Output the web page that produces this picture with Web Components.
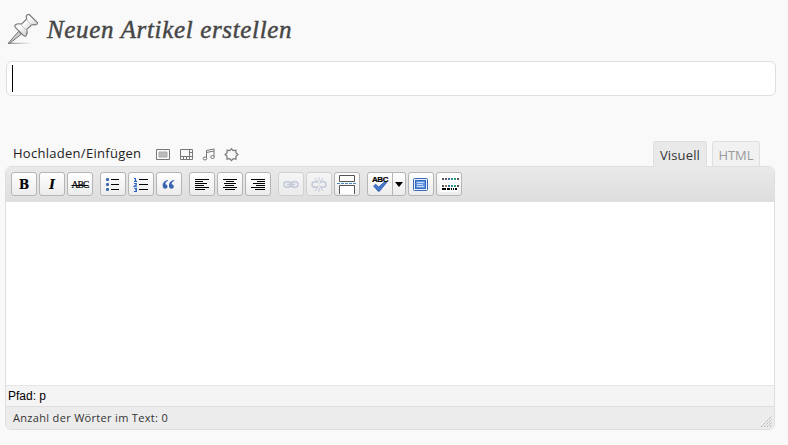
<!DOCTYPE html>
<html lang="de">
<head>
<meta charset="utf-8">
<title>Neuen Artikel erstellen</title>
<style>
body{margin:0;background:#f9f9f9;width:788px;height:445px;overflow:hidden;font-family:"Open Sans","Noto Sans",sans-serif;color:#333}
</style>
</head>
<body>
<post-editor></post-editor>
<script>
const define = (name, html) => customElements.define(name, class extends HTMLElement {
  constructor() {
    super();
    const t = document.createElement('template');
    t.innerHTML = html;
    this.attachShadow({mode: 'open'}).append(t.content.cloneNode(true));
  }
});

const rows = (list) => list.map(([x, y, w]) => `<rect x="${x}" y="${y}" width="${w}" height="1"/>`).join('');
const align = (kind) => rows([14, 8, 12, 9, 14, 10].map((w, i) => [kind === 'l' ? 6 : kind === 'r' ? 20 - w : 6 + Math.floor((14 - w) / 2), 7 + i * 2, w]));
const dots = (y, cols) => cols.map((c, i) => `<rect x="${6 + i * 3}" y="${y}" width="2" height="2" fill="${c}"/>`).join('');
const quote = '<path d="M12 8C8.500 8.500 6.500 10.800 6.700 14c.1 1.700 1.100 2.700 2.500 2.700 1.300 0 2.300-.9 2.300-2.200S10.500 12.300 9.300 12.300c0-1.600.9-2.900 2.700-3.600z"/>';
const chain = '<g fill="none" stroke="#9eabc6" stroke-width="1.500"><rect x="6" y="9.800" width="7" height="5.400" rx="2.700"/><rect x="13" y="9.800" width="7" height="5.400" rx="2.700"/>';
const icons = {
  ul: '<g fill="#3c6cb0"><rect x="6" y="6" width="3" height="3" rx="1"/><rect x="6" y="11" width="3" height="3" rx="1"/><rect x="6" y="16" width="3" height="3" rx="1"/></g><g shape-rendering="crispEdges">' + rows([[11,7,8],[11,12,8],[11,17,8]]) + '</g>',
  ol: '<g fill="none" stroke="#2a62c0" stroke-width="1.100"><path d="M6 6.500h1.500v3M6 9.400h3M6 11.500h2.300v1.200L6.200 14.300H9M6 16.300h2.400v1.500H7m1.400 0v1.700H6"/></g><g shape-rendering="crispEdges">' + rows([[11,7,9],[11,12,9],[11,17,9]]) + '</g>',
  quote: '<g fill="#3a63ae">' + quote + '<g transform="translate(6.300 0)">' + quote + '</g></g>',
  left: '<g shape-rendering="crispEdges">' + align('l') + '</g>',
  center: '<g shape-rendering="crispEdges">' + align('c') + '</g>',
  right: '<g shape-rendering="crispEdges">' + align('r') + '</g>',
  link: chain + '<path d="M9 12.500h8" stroke-width="1.800"/></g>',
  unlink: chain + '<path d="M13 5v4M9 6l2 3M17 6l-2 3M13 16v4M9 19l2-3M17 19l-2-3" stroke-width="1"/></g><path d="M12.200 9h1.500v7h-1.500z" fill="#f4f4f4"/>',
  more: '<g fill="#fff" stroke="#555"><path d="M5.500 3.500h15v6h-15zM5.500 22v-8.500h15V22"/></g><path d="M3 11.500h20" stroke="#4a8ac0" stroke-dasharray="3 1"/>',
  spell: '<path d="M6.500 14l2.300-1.800 2.700 2.900 6.500-5.600 1.700 1.100-7.200 8.600h-1.500z" fill="#4679cc" stroke="#2450a0" stroke-width=".7"/>',
  full: '<rect x="5.500" y="6.500" width="14" height="12" rx="1" fill="#e9f1fc" stroke="#3868b8"/><rect x="7.500" y="8.500" width="10" height="8" fill="#6294df" stroke="#3569be"/><path d="M9 10.500h7M9 12.500h6M9 14.500h7" stroke="#c8ddfa"/>',
  kitchen: '<g shape-rendering="crispEdges"><rect x="4" y="5" width="18" height="5" fill="#fff"/><rect x="4" y="12" width="18" height="8" fill="#fff"/>' + dots(6,['#555','#557','#44699c','#2a8fa5','#2aa070','#555']) + dots(13,['#555','#a07055','#44699c','#2a8fa5','#2aa070','#555']) + '<path d="M6 16h4v2H6zM11 16h3v2h-3zM15 16h1v2h-1zM17 16h1v2h-1zM19 16h2v2h-2z"/></g>'
};

define('pin-icon', `<style>:host{display:block;width:34px;height:34px}svg{display:block}</style>
<svg width="34" height="34" viewBox="6 12 34 34">
 <defs><linearGradient id="g" x1="0" y1="0" x2="1" y2="1"><stop offset="0" stop-color="#ccc"/><stop offset=".4" stop-color="#fff"/><stop offset="1" stop-color="#aaa"/></linearGradient>
 <linearGradient id="s"><stop offset="0" stop-color="#888"/><stop offset="1" stop-color="#aaa" stop-opacity="0"/></linearGradient></defs>
 <rect x="8" y="42.700" width="25" height="1.300" fill="url(#s)"/>
 <path d="M18.500 31.500L8.300 43.300l1.200.2L21.500 34z" fill="#ccc" stroke="#666" stroke-width=".9"/>
 <path d="M28 14.500c-1.300.3-2 1.300-1.700 2.800l.4 1.700-5.200 5.100c-2-.6-4.700-.4-6.300.9-.7.700-.6 1.600.1 2.500l8.300 8.200c.9.800 1.900.8 2.400 0 1.300-1.900 1.600-4.200.8-6.300l5.200-4.900 2.200.4c1.500.1 3-.3 3.300-1.300.1-.6-.3-1.200-.8-1.700l-7-6.900c-.6-.6-1.100-.7-1.700-.5z" fill="url(#g)" stroke="#777" stroke-width="1.100"/>
 <path d="M26.700 19c1 2.800 3 4.700 5.700 5.900M21.500 24.100c.5 2.500 2.400 4.500 5 5.400" fill="none" stroke="#bbb" stroke-width=".8"/>
</svg>`);

define('page-heading', `<style>
:host{display:flex;height:49px;padding-left:6px;box-sizing:border-box}
pin-icon{margin-top:12px}
h1{margin:12px 0 0 7px;font:italic 500 25px/36px "Liberation Serif",serif;color:#464646;letter-spacing:.66px;white-space:nowrap;-webkit-text-stroke:.45px #464646}
</style><pin-icon></pin-icon><h1><slot></slot></h1>`);

define('title-field', `<style>
:host{display:flex;box-sizing:border-box;width:770px;height:35px;margin:12px 0 0 6px;padding:3px 5px;border:1px solid #dfdfdf;border-radius:6px;background:#fff}
i{width:1px;height:27px;background:#000}
</style><i></i>`);

define('media-icons', `<style>:host{display:block;height:14px}svg{display:block}</style>
<svg width="84" height="14" viewBox="155 148 84 14" fill="none" stroke="#777">
 <path d="M156.500 149.500h13v10h-13z"/><path d="M159 152h8v5h-8z" fill="#bbb" stroke="#aaa"/>
 <path d="M180.500 149.500h12v10h-12z"/><path d="M180 156.500h13M189.500 149v8M189 152.500h4M183.500 157v3M186.500 157v3M189.500 157v3"/>
 <path d="M206.500 158v-7.500l7.500-1.500v7.500M206.500 152.500l7.500-1.500"/><ellipse cx="205" cy="158.500" rx="1.800" ry="1.500"/><ellipse cx="212.500" cy="157" rx="1.800" ry="1.500"/>
 <path d="M231.500 148.700l1.600 2 2.800-.5v2.600l2 1.700-2 1.700.2 2.900-2.800-.4-1.800 2-1.800-2-2.800.4.200-2.900-2-1.700 2-1.700v-2.600l2.800.5z" stroke-width="1.200"/>
</svg>`);

define('mode-tab', `<style>
:host{display:block;box-sizing:border-box;height:25px;width:48px;border:1px solid #dfdfdf;border-bottom:0;border-radius:3px 3px 0 0;background:#f1f1f1;color:#999;font:500 13px/27px "Open Sans",sans-serif;text-align:center;white-space:nowrap}
:host([active]){width:54px;height:26px;background:#e9e9e9;color:#333;letter-spacing:.15px}
</style><slot></slot>`);

define('tool-group', `<style>:host{display:flex;gap:2px}</style><slot></slot>`);

customElements.define('tool-button', class extends HTMLElement {
  constructor() {
    super();
    const icon = this.getAttribute('icon');
    this.attachShadow({mode: 'open'}).innerHTML = `<style>
:host{display:grid;place-items:center;position:relative;box-sizing:border-box;width:26px;height:24px;border:1px solid #b5b5b5;border-radius:3px;background:linear-gradient(#fff,#ececec);color:#000}
:host([off]){border-color:#d0d0d0;background:linear-gradient(#f5f5f5,#ebebeb)}
:host([off]) svg{opacity:.55}
:host([split]){width:26px;border-radius:3px 0 0 3px}
:host([arrow]){width:14px;margin-left:-3px;border-radius:0 3px 3px 0}
svg{grid-area:1/1;display:block;margin:-1px}
span{grid-area:1/1;font:bold 12px/20px "DejaVu Serif",serif;margin-top:2px;-webkit-text-stroke:.2px #000}
.i{font-style:italic;font-family:"DejaVu Serif",serif}
.abc{font:9.500px/20px "Liberation Serif",serif;letter-spacing:-.8px;text-decoration:line-through}
.sp{font:bold 8px/8px "Liberation Sans",sans-serif;letter-spacing:-.5px;align-self:start;margin-top:3px}
b{width:0;border:4px solid transparent;border-top:5px solid #000;border-bottom:0}
</style>${icons[icon] ? `<svg width="26" height="24" viewBox="0 0 26 24">${icons[icon]}</svg>` : ''}${this.hasAttribute('arrow') ? '<b></b>' : ''}${this.textContent ? `<span class="${this.getAttribute('look') || ''}"><slot></slot></span>` : ''}`;
  }
});

define('tool-bar', `<style>
:host{display:flex;gap:7px;box-sizing:border-box;height:35px;padding:5px;background:linear-gradient(#e9e9e9,#dedede);border-radius:5px 5px 0 0}
</style>
<tool-group><tool-button>B</tool-button><tool-button look="i">I</tool-button><tool-button look="abc">ABC</tool-button></tool-group>
<tool-group><tool-button icon="ul"></tool-button><tool-button icon="ol"></tool-button><tool-button icon="quote"></tool-button></tool-group>
<tool-group><tool-button icon="left"></tool-button><tool-button icon="center"></tool-button><tool-button icon="right"></tool-button></tool-group>
<tool-group><tool-button icon="link" off></tool-button><tool-button icon="unlink" off></tool-button><tool-button icon="more"></tool-button></tool-group>
<tool-group><tool-button icon="spell" look="sp" split>ABC</tool-button><tool-button arrow></tool-button><tool-button icon="full"></tool-button><tool-button icon="kitchen"></tool-button></tool-group>`);

define('editor-frame', `<style>
:host{display:flex;flex-direction:column;box-sizing:border-box;width:770px;height:264px;margin-left:5px;border:1px solid #dfdfdf;border-radius:6px;background:#fff;overflow:hidden}
.page{flex:1}
.path{box-sizing:border-box;height:21px;padding-left:2px;background:#f4f4f4;border-top:1px solid #e6e6e6;font:12px/20px "Liberation Sans",sans-serif;color:#000}
.status{display:flex;justify-content:space-between;box-sizing:border-box;height:23px;padding-left:7px;background:#ececec;border-top:1px solid #dfdfdf;font:11px/22px "Open Sans",sans-serif;color:#333}
.count{letter-spacing:.32px}
svg{align-self:flex-end;margin:0 1px 1px 0}
</style><tool-bar></tool-bar><div class="page"></div><div class="path"><span>Pfad: p</span></div>
<div class="status"><span class="count">Anzahl der Wörter im Text: 0</span><svg width="13" height="13" viewBox="0 0 13 13" stroke="#aaa" stroke-dasharray="1.400 .8"><path d="M1 12L12 1M4 12l8-8M7 12l5-5M10 12l2-2"/></svg></div>`);

define('post-editor', `<style>
:host{display:block}
.bar{display:flex;height:25px;margin-top:45px;padding:0 28px 0 13px}
.up{font:13px/25px "Open Sans",sans-serif;color:#222;width:142px;white-space:nowrap;letter-spacing:.28px}
media-icons{margin-top:7px}
.tabs{display:flex;gap:5px;margin-left:auto;position:relative;z-index:1}
</style>
<page-heading>Neuen Artikel erstellen</page-heading>
<title-field></title-field>
<div class="bar"><span class="up">Hochladen/Einfügen</span><media-icons></media-icons><div class="tabs"><mode-tab active>Visuell</mode-tab><mode-tab>HTML</mode-tab></div></div>
<editor-frame></editor-frame>`);
</script>
</body>
</html>
